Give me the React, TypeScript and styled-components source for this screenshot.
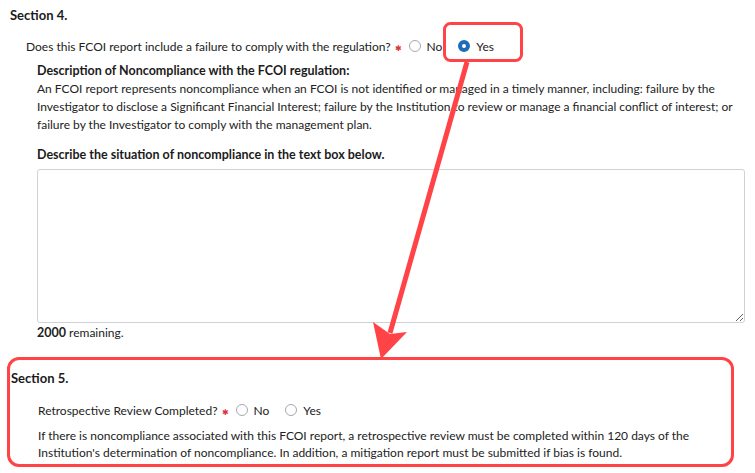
import React from 'react';
import styled, { createGlobalStyle } from 'styled-components';

const GlobalStyle = createGlobalStyle`
  body {
    margin: 0;
    background: #fff;
    font-family: Lato, 'Liberation Sans', sans-serif;
    color: #222;
  }
`;

const Page = styled.div`
  position: relative;
  width: 755px;
  height: 473px;
  padding: 6px 0 0 10px;
  box-sizing: border-box;
  overflow: hidden;
`;

const SectionTitle = styled.div`
  font-size: 13px;
  font-weight: 700;
  line-height: 18px;
  color: #1b1b1b;
`;

const QuestionRow = styled.div<{ $indent: number; $top: number }>`
  display: flex;
  align-items: center;
  height: 20px;
  font-size: 12px;
  margin: ${p => p.$top}px 0 0 ${p => p.$indent}px;
`;

const Required = styled.span`
  color: #e0303a;
  font-size: 8px;
  margin: 3px 7px 0 4px;
`;

const Option = styled.label<{ $gap: number }>`
  display: flex;
  align-items: center;
  gap: 6px;
  margin-right: ${p => p.$gap}px;
`;

const Radio = styled.span<{ $checked?: boolean }>`
  width: 12px;
  height: 12px;
  border-radius: 50%;
  box-sizing: border-box;
  border: ${p => (p.$checked ? '4px solid #1f6cb6' : '1px solid #a8a8a8')};
  background: #fff;
`;

const Block = styled.div<{ $top: number }>`
  margin: ${p => p.$top}px 0 0 27px;
  font-size: 12px;
  line-height: 18px;
`;

const Strong = styled.div<{ $top?: number }>`
  margin-top: ${p => p.$top || 0}px;
  font-weight: 700;
  font-size: 12.5px;
  color: #1b1b1b;
`;

const Paragraph = styled.p<{ $width: number; $lh: number }>`
  margin: 0;
  width: ${p => p.$width}px;
  line-height: ${p => p.$lh}px;
`;

const TextBox = styled.textarea`
  display: block;
  margin-top: 5px;
  width: 708px;
  height: 154px;
  box-sizing: border-box;
  border: 1px solid #cfd2d6;
  border-radius: 3px;
  font-family: inherit;
  outline: none;
`;

const Remaining = styled.div`
  margin-top: 1px;
  font-size: 12px;
  line-height: 18px;
  b {
    font-weight: 700;
    font-size: 12.5px;
  }
`;

const HighlightSection = styled.section`
  margin: 15px 0 0 -3px;
  width: 727px;
  box-sizing: border-box;
  border: 3px solid #ff4347;
  border-radius: 12px;
  padding: 9px 0 3px 1px;
`;

const Annotation = styled.svg`
  position: absolute;
  left: 0;
  top: 0;
  pointer-events: none;
`;

export default function App() {
  return (
    <>
      <GlobalStyle />
      <Page>
        <SectionTitle>Section 4.</SectionTitle>
        <QuestionRow $indent={16} $top={12}>
          Does this FCOI report include a failure to comply with the regulation?
          <Required>✱</Required>
          <Option $gap={16}><Radio />No</Option>
          <Option $gap={0}><Radio $checked />Yes</Option>
        </QuestionRow>
        <Block $top={6}>
          <Strong>Description of Noncompliance with the FCOI regulation:</Strong>
          <Paragraph $width={708} $lh={18}>
            An FCOI report represents noncompliance when an FCOI is not identified or managed in a timely manner, including: failure by the Investigator to disclose a Significant Financial Interest; failure by the Institution to review or manage a financial conflict of interest; or failure by the Investigator to comply with the management plan.
          </Paragraph>
          <Strong $top={12}>Describe the situation of noncompliance in the text box below.</Strong>
          <TextBox />
          <Remaining><b>2000</b> remaining.</Remaining>
        </Block>
        <HighlightSection>
          <SectionTitle>Section 5.</SectionTitle>
          <QuestionRow $indent={27} $top={13}>
            Retrospective Review Completed?
            <Required>✱</Required>
            <Option $gap={16}><Radio />No</Option>
            <Option $gap={0}><Radio />Yes</Option>
          </QuestionRow>
          <Block $top={7}>
            <Paragraph $width={690} $lh={17}>
              If there is noncompliance associated with this FCOI report, a retrospective review must be completed within 120 days of the Institution's determination of noncompliance. In addition, a mitigation report must be submitted if bias is found.
            </Paragraph>
          </Block>
        </HighlightSection>
        <Annotation width="755" height="473" viewBox="0 0 755 473">
          <rect x="444.5" y="23.5" width="77" height="37" rx="6" fill="none" stroke="#ff4347" strokeWidth="3" />
          <line x1="467" y1="62" x2="390" y2="333" stroke="#ff4347" strokeWidth="5" />
          <polygon points="381,359 373,322 390,334 407,332" fill="#ff4347" />
        </Annotation>
      </Page>
    </>
  );
}
